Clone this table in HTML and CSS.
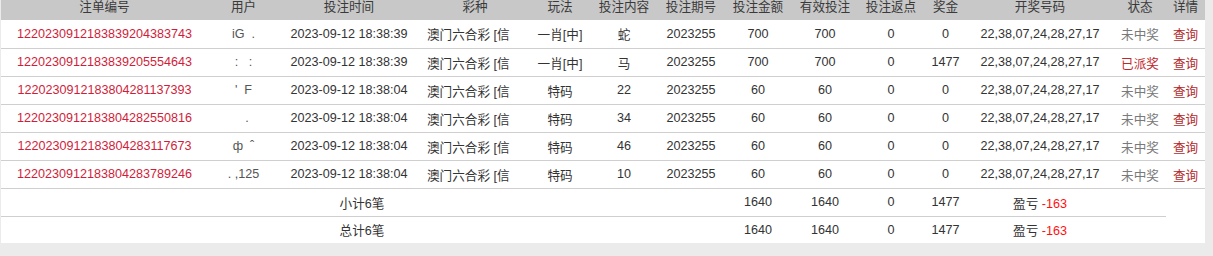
FILE: index.html
```html
<!DOCTYPE html>
<html lang="zh">
<head>
<meta charset="utf-8">
<title>注单</title>
<link rel="stylesheet" href="styles.css">
</head>
<body>
<div class="panel">
<table class="bets">
<colgroup>
<col class="c-id"><col class="c-user"><col class="c-time"><col class="c-game"><col class="c-play"><col class="c-content"><col class="c-issue"><col class="c-amount"><col class="c-valid"><col class="c-rebate"><col class="c-prize"><col class="c-nums"><col class="c-status"><col class="c-detail">
</colgroup>
<thead>
<tr>
<th>注单编号</th><th>用户</th><th>投注时间</th><th>彩种</th><th>玩法</th><th>投注内容</th><th>投注期号</th><th>投注金额</th><th>有效投注</th><th>投注返点</th><th>奖金</th><th>开奖号码</th><th>状态</th><th>详情</th>
</tr>
</thead>
<tbody>
<tr>
<td class="id">1220230912183839204383743</td><td class="user">iG&nbsp;&nbsp;.</td><td>2023-09-12 18:38:39</td><td class="game">澳门六合彩 [信</td><td>一肖[中]</td><td>蛇</td><td>2023255</td><td>700</td><td>700</td><td>0</td><td>0</td><td>22,38,07,24,28,27,17</td><td class="lost">未中奖</td><td class="link">查询</td>
</tr>
<tr>
<td class="id">1220230912183839205554643</td><td class="user">: &nbsp;&nbsp;:</td><td>2023-09-12 18:38:39</td><td class="game">澳门六合彩 [信</td><td>一肖[中]</td><td>马</td><td>2023255</td><td>700</td><td>700</td><td>0</td><td>1477</td><td>22,38,07,24,28,27,17</td><td class="won">已派奖</td><td class="link">查询</td>
</tr>
<tr>
<td class="id">1220230912183804281137393</td><td class="user">'&nbsp;&nbsp;F</td><td>2023-09-12 18:38:04</td><td class="game">澳门六合彩 [信</td><td>特码</td><td>22</td><td>2023255</td><td>60</td><td>60</td><td>0</td><td>0</td><td>22,38,07,24,28,27,17</td><td class="lost">未中奖</td><td class="link">查询</td>
</tr>
<tr>
<td class="id">1220230912183804282550816</td><td class="user">&nbsp;&nbsp;.</td><td>2023-09-12 18:38:04</td><td class="game">澳门六合彩 [信</td><td>特码</td><td>34</td><td>2023255</td><td>60</td><td>60</td><td>0</td><td>0</td><td>22,38,07,24,28,27,17</td><td class="lost">未中奖</td><td class="link">查询</td>
</tr>
<tr>
<td class="id">1220230912183804283117673</td><td class="user">ф&nbsp;&nbsp;ˆ</td><td>2023-09-12 18:38:04</td><td class="game">澳门六合彩 [信</td><td>特码</td><td>46</td><td>2023255</td><td>60</td><td>60</td><td>0</td><td>0</td><td>22,38,07,24,28,27,17</td><td class="lost">未中奖</td><td class="link">查询</td>
</tr>
<tr>
<td class="id">1220230912183804283789246</td><td class="user">. ,125</td><td>2023-09-12 18:38:04</td><td class="game">澳门六合彩 [信</td><td>特码</td><td>10</td><td>2023255</td><td>60</td><td>60</td><td>0</td><td>0</td><td>22,38,07,24,28,27,17</td><td class="lost">未中奖</td><td class="link">查询</td>
</tr>
<tr class="sum">
<td colspan="7">小计6笔</td><td>1640</td><td>1640</td><td>0</td><td>1477</td><td>盈亏 <span class="neg">-163</span></td><td></td>
</tr>
<tr class="sum last">
<td colspan="7">总计6笔</td><td>1640</td><td>1640</td><td>0</td><td>1477</td><td>盈亏 <span class="neg">-163</span></td><td></td>
</tr>
</tbody>
</table>
</div>
</body>
</html>
```
FILE: styles.css
```css
html, body {
  margin: 0;
  padding: 0;
  background: #ebebeb;
}
body {
  font-family: "Liberation Sans", Arial, "Noto Sans CJK SC", sans-serif;
  font-size: 12.6px;
  color: #333;
}
.panel {
  margin-left: 1px;
  width: 1204px;
  background: #fff;
}
.bets {
  width: 1204px;
  border-collapse: collapse;
  table-layout: fixed;
}
.c-id { width: 207px; }
.c-user { width: 71px; }
.c-time { width: 140px; }
.c-game { width: 112px; }
.c-play { width: 58px; }
.c-content { width: 70px; }
.c-issue { width: 64px; }
.c-amount { width: 70px; }
.c-valid { width: 64px; }
.c-rebate { width: 68px; }
.c-prize { width: 41px; }
.c-nums { width: 148px; }
.c-status { width: 52px; }
.c-detail { width: 39px; }

.bets th {
  background: #c8c8c8;
  color: #3a3a3a;
  font-weight: normal;
  height: 20px;
  padding: 0 0 5px 0;
  line-height: 15px;
  box-sizing: border-box;
  text-align: center;
  white-space: nowrap;
  overflow: hidden;
}
.bets td {
  height: 28px;
  box-sizing: border-box;
  padding: 0;
  text-align: center;
  white-space: nowrap;
  overflow: hidden;
  border-bottom: 1px solid #cfcfcf;
  color: #333;
}
.bets td.id { color: #cf1d3a; }
.bets td.user { color: #555; }
.bets td.game { text-align: left; padding-left: 8px; }
.bets td.lost { color: #7a7a7a; }
.bets td.won { color: #c0272d; }
.bets td.link { color: #b22a2a; }
.bets tr.last td { border-bottom: none; height: 27px; }
.neg { color: #ff1010; }
```
